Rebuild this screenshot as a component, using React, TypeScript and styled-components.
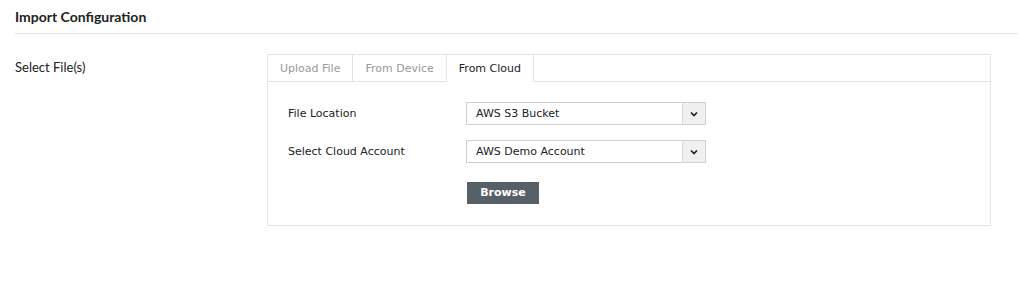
import React from 'react';
import styled, { createGlobalStyle } from 'styled-components';

const GlobalStyle = createGlobalStyle`
  body {
    margin: 0;
    background: #ffffff;
    font-family: "DejaVu Sans", Verdana, sans-serif;
    color: #222;
  }
`;

const Page = styled.div`
  padding: 0 1px 0 15px;
`;

const Header = styled.header`
  height: 33px;
  display: flex;
  align-items: center;
  border-bottom: 1px solid #e4e4e4;
`;

const Title = styled.h1`
  margin: 0;
  font-family: Lato, "Liberation Sans", sans-serif;
  font-size: 14px;
  font-weight: 700;
  color: #222;
`;

const FormRow = styled.div`
  display: grid;
  grid-template-columns: 252px 724px;
  margin-top: 20px;
`;

const RowLabel = styled.div`
  padding-top: 6px;
  font-family: Lato, "Liberation Sans", sans-serif;
  font-size: 13px;
  line-height: 14px;
  color: #222;
`;

const Panel = styled.div`
  border: 1px solid #e4e4e4;
`;

const TabBar = styled.div`
  display: flex;
  height: 26px;
  border-bottom: 1px solid #e4e4e4;
`;

const Tab = styled.div<{ $active?: boolean }>`
  display: flex;
  align-items: center;
  padding: 0 12px;
  height: 26px;
  margin-bottom: -1px;
  border-right: 1px solid #e4e4e4;
  border-bottom: 1px solid ${p => (p.$active ? '#ffffff' : '#e4e4e4')};
  background: #ffffff;
  font-size: 11px;
  color: ${p => (p.$active ? '#222' : '#999')};
  cursor: pointer;
`;

const TabBody = styled.div`
  padding: 20px 20px 21px 20px;
  display: flex;
  flex-direction: column;
  gap: 15px;
`;

const Field = styled.div`
  display: flex;
  align-items: center;
`;

const FieldLabel = styled.label`
  width: 178px;
  font-size: 11px;
  color: #222;
`;

const Select = styled.div`
  width: 240px;
  height: 23px;
  box-sizing: border-box;
  border: 1px solid #d0d0d0;
  display: flex;
  align-items: stretch;
  background: #fff;
`;

const SelectValue = styled.span`
  flex: 1;
  display: flex;
  align-items: center;
  padding-left: 9px;
  font-size: 11px;
  color: #222;
`;

const SelectArrow = styled.span`
  width: 22px;
  display: flex;
  align-items: center;
  justify-content: center;
  background: #f0f0f0;
  border-left: 1px solid #dcdcdc;
`;

const Actions = styled.div`
  padding-left: 179px;
  padding-top: 3px;
`;

const BrowseButton = styled.button`
  width: 72px;
  height: 22px;
  border: none;
  background: #576066;
  color: #fff;
  font-family: "DejaVu Sans", Verdana, sans-serif;
  font-size: 11px;
  font-weight: 700;
  cursor: pointer;
`;

const Chevron = () => (
  <svg width="8" height="6" viewBox="0 0 8 6">
    <path d="M1 1.5 L4 4.5 L7 1.5" fill="none" stroke="#222" strokeWidth="1.7" />
  </svg>
);

const App: React.FC = () => {
  return (
    <>
      <GlobalStyle />
      <Page>
        <Header>
          <Title>Import Configuration</Title>
        </Header>
        <FormRow>
          <RowLabel>Select File(s)</RowLabel>
          <Panel>
            <TabBar>
              <Tab>Upload File</Tab>
              <Tab>From Device</Tab>
              <Tab $active>From Cloud</Tab>
            </TabBar>
            <TabBody>
              <Field>
                <FieldLabel>File Location</FieldLabel>
                <Select>
                  <SelectValue>AWS S3 Bucket</SelectValue>
                  <SelectArrow><Chevron /></SelectArrow>
                </Select>
              </Field>
              <Field>
                <FieldLabel>Select Cloud Account</FieldLabel>
                <Select>
                  <SelectValue>AWS Demo Account</SelectValue>
                  <SelectArrow><Chevron /></SelectArrow>
                </Select>
              </Field>
              <Actions>
                <BrowseButton>Browse</BrowseButton>
              </Actions>
            </TabBody>
          </Panel>
        </FormRow>
      </Page>
    </>
  );
};

export default App;
